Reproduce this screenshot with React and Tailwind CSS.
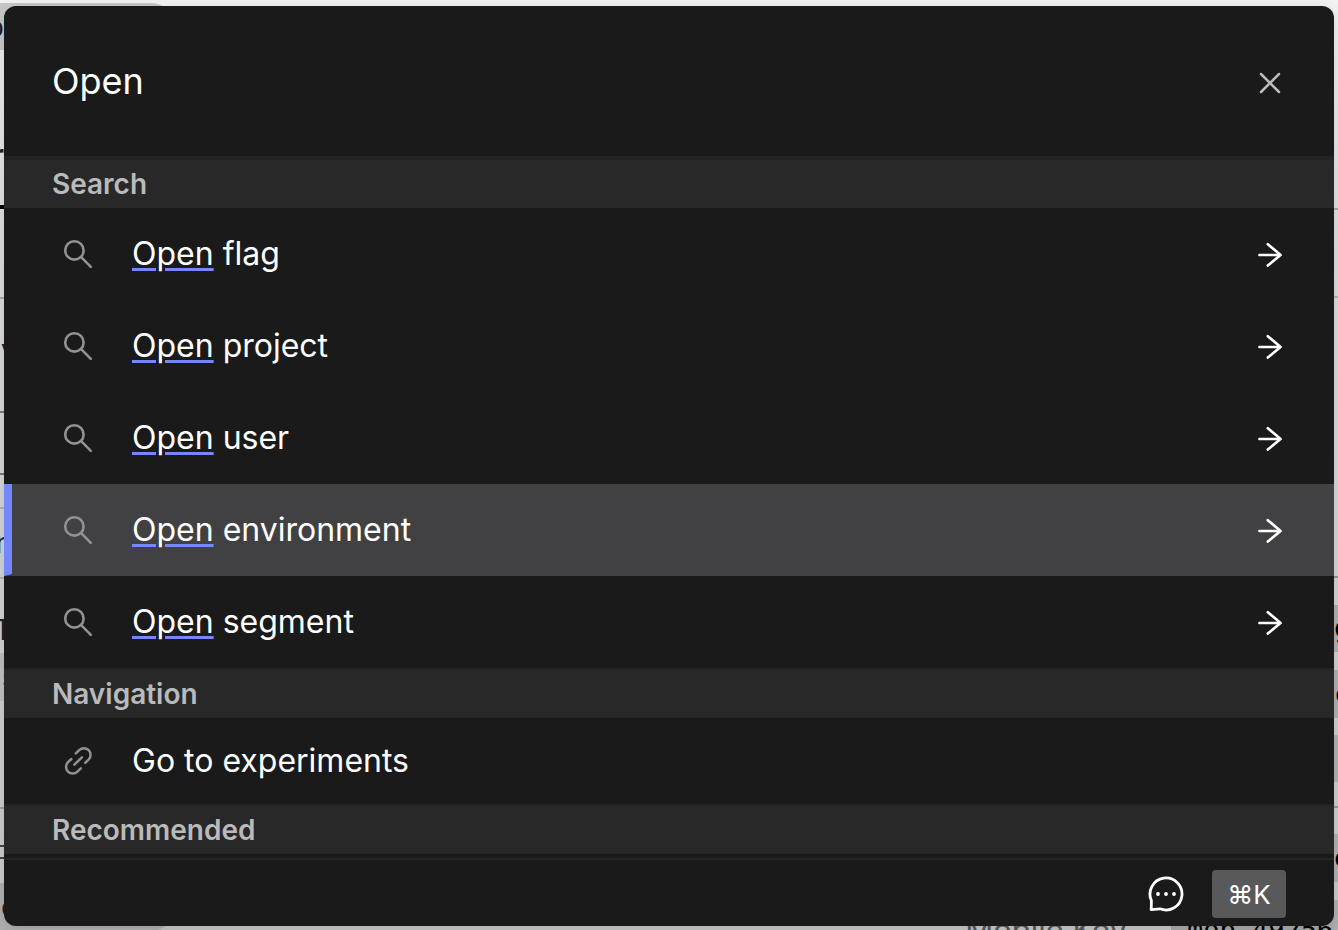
import React from "react";

const results = ["flag", "project", "user", "environment", "segment"];

function SearchIcon() {
  return (
    <svg aria-hidden="true" viewBox="0 0 30 30" className="h-[30px] w-[30px]" fill="none" stroke="#929292" strokeWidth="2.6" strokeLinecap="round">
      <circle cx="11.4" cy="11.4" r="9.2" />
      <path d="M18.2 18.2 27.8 27.8" />
    </svg>
  );
}

function LinkIcon() {
  return (
    <svg aria-hidden="true" viewBox="0 0 30 30" className="h-[30px] w-[30px]" fill="none" stroke="#929292" strokeWidth="2.5" strokeLinecap="round">
      <path d="M12.8 7.4l3.4-3.2a6.6 6.6 0 0 1 9.4 9.4l-3.4 3.2" />
      <path d="M17.8 22.4l-3.4 3.2a6.6 6.6 0 0 1-9.4-9.4l3.4-3.2" />
      <path d="M11.4 18.7 18.9 11.3" />
    </svg>
  );
}

function ArrowIcon() {
  return (
    <svg aria-hidden="true" viewBox="0 -1 24 24" className="h-6 w-6 overflow-visible" fill="none" stroke="#fff" strokeWidth="2.6" strokeLinecap="round" strokeLinejoin="round">
      <path d="M1.4 12H22.5M9.8 1.2 22.6 12 9.8 22.6" />
    </svg>
  );
}

function Heading({ children, first = false }) {
  return (
    <h2 className={"border-[#232323] bg-[#282828] px-12 py-1.5 text-[28px] leading-9 font-semibold text-[#b9babb] " + (first ? "border-t-4" : "border-t-2")}>
      {children}
    </h2>
  );
}

const leftRows = [
  ["h-[3px]", "", ""],
  ["h-[47px] bg-[#c6c7c8] rounded-tr-3xl", "p", "w-1 justify-end"],
  ["h-[68px]", "", ""],
  ["h-[74px] font-bold", "re", "w-5 justify-end"],
  ["h-[13px]", "", ""],
  ["h-1 bg-black", "", ""],
  ["h-[90px] border-b-2 border-[#a8a8aa]", "", ""],
  ["h-[114px] border-b-2 border-[#77787a]", "V", "pl-px"],
  ["h-[62px] border-b-2 border-[#77787a]", "", ""],
  ["h-[34px] border-b-2 border-[#b0b0b2]", "", ""],
  ["h-[70px] border-b-2 border-[#b0b0b2]", "n", "w-3 justify-end"],
  ["h-[28px]", "", ""],
  ["h-[46px]", "T", "w-3 justify-end"],
  ["h-12 bg-[#bebfc0]", "s", "pl-0.5"],
  ["h-[108px] border-b-2 border-[#a0a0a2]", "", ""],
  ["h-[38px] border-b-2 border-[#414345]", "", ""],
  ["h-3 border-b-2 border-[#414345]", "", ""],
  ["h-6", "", ""],
  ["h-12 bg-[#b0b0b0] rounded-br-3xl", "c", "pl-px"],
];

const rightRows = [
  ["h-[210px] border-b-2 border-[#a8a8a8]", ""],
  ["h-[88px] border-b-2 border-[#b4b4b4]", ""],
  ["h-[280px] border-b-2 border-[#979799]", ""],
  ["h-[27px]", ""],
  ["h-[47px] bg-[#b0b0b2]", "g"],
  ["h-[18px]", ""],
  ["h-12 bg-[#b0b0b2]", "c"],
  ["h-[17px]", ""],
  ["h-[47px] bg-[#b0b0b2]", ","],
  ["h-[26px] border-b-2 border-[#979799]", ""],
  ["h-[26px]", ""],
  ["h-12 bg-[#b0b0b2]", "e"],
  ["h-[18px]", ""],
  ["h-[30px] bg-[#b0b0b2]", ""],
];

function Backdrop() {
  return (
    <div aria-hidden="true" className="absolute inset-0 flex justify-between overflow-hidden bg-linear-to-b from-[#f2f2f2] via-[#dcdddf] via-25% to-[#c8c8c8]">
      <div className="w-[175px] shrink-0">
        {leftRows.map(([style, text, place], i) => (
          <div key={i} className={"flex items-center overflow-hidden text-[28px] text-[#202224] " + style}>
            <span className={"flex " + place}>{text}</span>
          </div>
        ))}
      </div>
      <div className="flex flex-1 items-end justify-end gap-11 text-[31px] leading-10">
        <span className="-mb-5 text-[#55575a]">Mobile Key</span>
        <span className="-mb-5 w-[163px] shrink-0 bg-[#aaaaaa] pl-4 font-['DejaVu_Sans_Mono',monospace] text-[27px] whitespace-nowrap text-black">mob-492561</span>
      </div>
      <div className="w-1 shrink-0">
        {rightRows.map(([style, text], i) => (
          <div key={i} className={"flex items-center overflow-hidden font-['DejaVu_Sans_Mono',monospace] text-[27px] text-black " + style}>
            {text}
          </div>
        ))}
      </div>
    </div>
  );
}

export default function App() {
  return (
    <div className="relative min-h-screen px-1 pt-1.5 pb-1 font-[Inter,sans-serif]">
      <Backdrop />
      <main role="dialog" aria-label="Command palette" className="relative overflow-hidden rounded-xl bg-[#1a1a1a] text-white shadow-[0_4px_16px_rgba(0,0,0,0.12)]">
        <header className="flex h-[150px] items-center justify-between px-12">
          <input aria-label="Command" defaultValue="Open" className="min-w-0 flex-1 bg-transparent text-4xl outline-none" />
          <button aria-label="Close" className="mt-1 flex h-8 w-8 items-center justify-center">
            <svg aria-hidden="true" viewBox="0 0 22 22" className="h-[22px] w-[22px]" fill="none" stroke="#b9babb" strokeWidth="2.5" strokeLinecap="round">
              <path d="M2 2 20 20M20 2 2 20" />
            </svg>
          </button>
        </header>
        <Heading first>Search</Heading>
        <ul>
          {results.map((name) => (
            <li key={name}>
              <button className={"flex h-[92px] w-full items-center border-b-2 border-l-8 border-b-transparent pt-0.5 pr-13 pl-[51px] text-left text-[32px] " + (name === "environment" ? "border-l-[#7388ff] bg-[#414143]" : "border-l-transparent")}>
                <SearchIcon />
                <span className="ml-[39px] flex-1">
                  <span className="underline decoration-[#7388ff] decoration-3 underline-offset-3">Open</span> {name}
                </span>
                <ArrowIcon />
              </button>
            </li>
          ))}
        </ul>
        <Heading>Navigation</Heading>
        <a href="#experiments" className="flex h-[86px] items-center pl-[59px] text-[32px]">
          <LinkIcon />
          <span className="ml-[39px]">Go to experiments</span>
        </a>
        <Heading>Recommended</Heading>
        <footer className="mt-1 flex h-[68px] items-center justify-end gap-7 border-t-2 border-[#252525] pt-0.5 pr-12">
          <button aria-label="Feedback">
            <svg aria-hidden="true" viewBox="0 0 36 36" className="h-9 w-9" fill="none" stroke="#fff" strokeWidth="2.8" strokeLinejoin="round">
              <path d="M12 32.8 3.2 33.6 3.4 24.5A16 16 0 1 1 12 32.8Z" />
              <g fill="#fff" stroke="none">
                <circle cx="10" cy="18" r="1.9" />
                <circle cx="18" cy="18" r="1.9" />
                <circle cx="26" cy="18" r="1.9" />
              </g>
            </svg>
          </button>
          <kbd className="flex h-12 w-[74px] items-center justify-center rounded-sm bg-[#58595b] font-[Inter,sans-serif] text-[26px]">⌘K</kbd>
        </footer>
      </main>
    </div>
  );
}
